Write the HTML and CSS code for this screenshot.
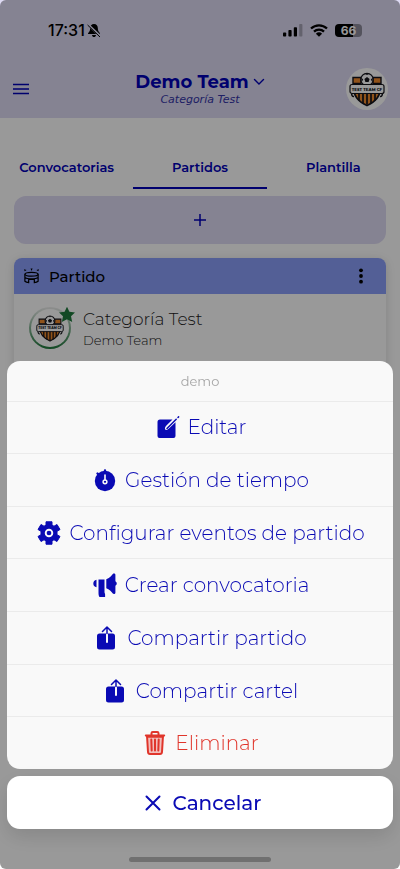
FILE: index.html
```
<!DOCTYPE html>
<html lang="es">
<head>
	<meta charset="utf-8">
	<meta name="viewport" content="width=device-width, initial-scale=1">
	<title>Demo Team - Partidos</title>
	<link rel="stylesheet" href="styles.css">
</head>
<body>
	<!-- shared icons -->
	<svg class="sprite" aria-hidden="true">
		<symbol id="crest" viewBox="0 0 36 34">
			<path d="M4 5h8v6H4zM24 5h8v6h-8z" fill="#f08a2c" stroke="#15151c" stroke-width="1.4"/>
			<path d="M5 17h26c0 7-4 12-13 16C9 29 5 24 5 17z" fill="#f08a2c" stroke="#15151c" stroke-width="1.6"/>
			<path d="M10 20v8M14 20v11M18 20v12M22 20v11M26 20v8" stroke="#15151c" stroke-width="1.7"/>
			<circle cx="18" cy="7" r="6.2" fill="#fff" stroke="#15151c" stroke-width="1.3"/>
			<path d="M18 4.500l2.600 1.900-1 3h-3.200l-1-3zM16 1.200h4l-2 1.300zM12.200 5l2 2-1.500 2.500zM23.800 5l-2 2 1.500 2.500z" fill="#15151c"/>
			<path d="M3 21a2 2 0 0 0 2 3M33 21a2 2 0 0 1-2 3" stroke="#15151c" stroke-width="1.500" fill="none"/>
			<rect x="1" y="12" width="34" height="9" rx="2" fill="#fff" stroke="#15151c" stroke-width="1.200"/>
			<text x="18" y="18" text-anchor="middle" class="crest-text">TEST TEAM CF</text>
		</symbol>
		<symbol id="share" viewBox="0 0 24 24">
			<path d="M5.500 7.500h5V16a1 1 0 0 0 2 0V7.500h4.500a2.500 2.500 0 0 1 2.500 2.500v11a2.500 2.500 0 0 1-2.500 2.500H4A2.500 2.500 0 0 1 1.500 21V10A2.500 2.500 0 0 1 4 7.500z" transform="translate(.5)" fill="currentColor"/>
			<path d="M12 7.500V1.500M7.500 5.500L12 1l4.500 4.500" fill="none" stroke="currentColor" stroke-width="1.500" stroke-linecap="round" stroke-linejoin="round"/>
		</symbol>
	</svg>

	<div class="app">
		<header class="header">
			<div class="status">
				<div class="status-left">
					<span>17:31</span>
					<svg width="14" height="15" viewBox="0 0 14 15"><path d="M7 1C4.500 1 3.200 3 3.200 5c0 3-1.200 4-2 5-.4.600-.2 1 .5 1h10.600c.7 0 .9-.4.500-1-.8-1-2-2-2-5 0-2-1.300-4-3.800-4zM5 12h4c-.2 1.400-1 2-2 2s-1.800-.6-2-2z" fill="currentColor"/><path d="M1 1.500l12.500 12" stroke="#dedaf3" stroke-width="2.400"/><path d="M.6 2l12.400 12" stroke="currentColor" stroke-width="1"/></svg>
				</div>
				<div class="status-right">
					<svg width="20" height="13" viewBox="0 0 20 13"><g fill="currentColor"><rect x="0" y="8.500" width="3.200" height="4" rx=".8"/><rect x="5.400" y="6" width="3.200" height="6.500" rx=".8"/><rect x="10.800" y="3.200" width="3.200" height="9.300" rx=".8"/><rect x="16.200" y="0" width="3.200" height="12.500" rx=".8" opacity=".25"/></g></svg>
					<svg width="18" height="13" viewBox="0 0 18 13"><path d="M1 4.500a11.600 11.600 0 0 1 16 0M4 7.700a7.200 7.200 0 0 1 10 0" fill="none" stroke="currentColor" stroke-width="2.300"/><path d="M5.900 9.700a4.500 4.500 0 0 1 6.200 0L9 12.800z" fill="currentColor"/></svg>
					<span class="battery">66</span>
				</div>
			</div>
			<div class="toolbar">
				<button class="menu-btn" type="button" aria-label="Menú">
					<svg width="18" height="12" viewBox="0 0 18 12"><path d="M1 1.500h16M1 6h16M1 10.500h16" stroke="currentColor" stroke-width="1.300"/></svg>
				</button>
				<div class="team">
					<button class="team-name" type="button">Demo Team
						<svg width="12" height="8" viewBox="0 0 12 8"><path d="M1.500 1.500L6 6l4.500-4.500" fill="none" stroke="currentColor" stroke-width="1.400" stroke-linecap="round"/></svg>
					</button>
					<div class="team-category">Categoría Test</div>
				</div>
				<div class="avatar"><svg width="36" height="35"><use href="#crest"/></svg></div>
			</div>
		</header>

		<nav class="tabs">
			<a href="#convocatorias">Convocatorias</a>
			<a href="#partidos" class="active">Partidos</a>
			<a href="#plantilla">Plantilla</a>
		</nav>

		<main class="content">
			<button class="add-btn" type="button" aria-label="Añadir partido">
				<svg width="14" height="14" viewBox="0 0 14 14"><path d="M7 1v12M1 7h12" stroke="currentColor" stroke-width="1.500"/></svg>
			</button>
			<section class="card">
				<div class="card-header">
					<svg width="17" height="16" viewBox="0 0 18 16"><g fill="none" stroke="currentColor" stroke-width="1.300"><ellipse cx="9" cy="6.200" rx="7" ry="2"/><path d="M2 6.200v7.300c1 .8 2.200 1.200 4 1.400v-3.400h6v3.400c1.800-.2 3-.6 4-1.400V6.200M2 9.500c2 2 12 2 14 0"/></g><path d="M1 .8l2.800.8-2 1.500zM17 .8l-2.800.8 2 1.500zM8 0h2.200L9 2.600z" fill="currentColor"/></svg>
					<h2>Partido</h2>
					<button class="more-btn" type="button" aria-label="Opciones">
						<svg width="6" height="16" viewBox="0 0 6 16" fill="currentColor"><circle cx="3" cy="2.300" r="1.900"/><circle cx="3" cy="8" r="1.900"/><circle cx="3" cy="13.700" r="1.900"/></svg>
					</button>
				</div>
				<div class="match">
					<div class="match-crest">
						<svg width="28" height="27"><use href="#crest"/></svg>
						<svg class="star" width="18" height="17" viewBox="0 0 18 17"><path d="M9 .8l2.400 5 5.600.6-4 3.900 1.200 5.700L9 13.200 3.800 16 5 10.300 1 6.400l5.600-.6z" fill="#1e7a3c"/></svg>
					</div>
					<div>
						<div class="match-title">Categoría Test</div>
						<div class="match-team">Demo Team</div>
					</div>
				</div>
			</section>
		</main>
	</div>

	<div class="overlay">
		<div class="sheet" role="dialog" aria-labelledby="sheet-title">
			<div class="sheet-group">
				<div class="sheet-title" id="sheet-title">demo</div>
				<button type="button">
					<svg viewBox="0 0 24 24"><path d="M4 4.500h12.500l-6.300 6.300c-1.200 1.400-1.600 2.800-1 3.700 1 .8 2.600.3 3.700-.9l6.600-6.400V21a2 2 0 0 1-2 2H3.500a2 2 0 0 1-2-2V7A2.500 2.500 0 0 1 4 4.500z" fill="currentColor"/><path d="M11 13.500l9.200-9.200M22 2.500l.6-.6" stroke="currentColor" stroke-width="1.500" stroke-linecap="round"/></svg>
					Editar
				</button>
				<button type="button">
					<svg viewBox="0 0 24 24"><circle cx="12" cy="13" r="10.200" fill="currentColor"/><path d="M12 2.500v2M4.500 5.500l2 2" stroke="currentColor" stroke-width="2.400" stroke-linecap="round"/><circle cx="12" cy="13.800" r="1.900" fill="none" stroke="#f9f9f9" stroke-width="1.500"/><path d="M12 7v5" stroke="#f9f9f9" stroke-width="1.600" stroke-linecap="round"/></svg>
					Gestión de tiempo
				</button>
				<button type="button">
					<svg viewBox="0 0 24 24"><path d="M9 .8h6v3.400l2 1 3-1.700 3 5-3 1.800v3.400l3 1.800-3 5-3-1.700-2 1v3.400H9v-3.400l-2-1-3 1.700-3-5 3-1.800v-3.400L1 8.500l3-5 3 1.700 2-1z" fill="currentColor" stroke="currentColor" stroke-width="1" stroke-linejoin="round"/><circle cx="12" cy="12" r="3.300" fill="none" stroke="#f9f9f9" stroke-width="1.900"/></svg>
					Configurar eventos de partido
				</button>
				<button type="button">
					<svg viewBox="0 0 24 24"><path d="M5.500 6.500h6V19c0 1.300.6 1.200.6 2.500V24H6.500C5.500 22.700 5.500 21 5.500 19zM3.500 6.700v7.600C1.500 14 .3 12.500.3 10.500s1.200-3.500 3.200-3.800zM13.300 6.300c3-1.200 5-3.200 6.500-5.300.8-.9 2.600-.5 2.600.8v6.500c1.800.8 1.800 3.600 0 4.400v7c0 1.300-1.800 1.700-2.600.8-1.500-2.100-3.500-4.100-6.500-5.300z" fill="currentColor"/></svg>
					Crear convocatoria
				</button>
				<button type="button">
					<svg viewBox="0 0 24 24"><use href="#share"/></svg>
					Compartir partido
				</button>
				<button type="button">
					<svg viewBox="0 0 24 24"><use href="#share"/></svg>
					Compartir cartel
				</button>
				<button type="button" class="danger">
					<svg viewBox="0 0 24 24"><path d="M4 4.500l1 16.500c.1 1.200.9 2 2 2h10c1.100 0 1.900-.8 2-2l1-16.500z" fill="currentColor" fill-opacity=".3"/><g fill="none" stroke="currentColor" stroke-width="2" stroke-linejoin="round" stroke-linecap="round"><path d="M4 4.500l1 16.500c.1 1.200.9 2 2 2h10c1.100 0 1.900-.8 2-2l1-16.500M2.800 4.500h18.400M8.500 4V2.300c0-.7.500-1.200 1.200-1.200h4.600c.7 0 1.200.5 1.200 1.200V4"/><path d="M4.500 5.500h15" stroke-width="2.500"/><path d="M8.300 8.500l.4 11M12 8.500v11M15.700 8.500l-.4 11"/></g></svg>
					Eliminar
				</button>
			</div>
			<button type="button" class="sheet-cancel">
				<svg viewBox="0 0 24 24"><path d="M5.500 5.500l13 13M18.500 5.500l-13 13" stroke="currentColor" stroke-width="2" stroke-linecap="round"/></svg>
				Cancelar
			</button>
		</div>
		<div class="home-bar"></div>
	</div>
</body>
</html>
```
FILE: styles.css
```
* {box-sizing:border-box}
body {margin:0;background:#fff;color:#000;font-family:Montserrat, Inter, sans-serif}
button {border:0;padding:0;background:none;color:inherit;font:inherit;cursor:pointer}
a {color:inherit;text-decoration:none}
svg {display:block;flex:none}
.sprite {display:none}
.crest-text {font-size:4px;font-weight:800;fill:#15151c}

.app {height:100vh;overflow:hidden;color:#0000b8}

/* header */
.header {background:#dedaf3;height:118px;padding-top:20px}
.status {display:flex;justify-content:space-between;align-items:center;height:20px;padding:0 38px 0 48px;color:#000;font-family:Inter, sans-serif}
.status-left, .status-right {display:flex;align-items:center}
.status-left {gap:2px;font-size:16px;font-weight:500}
.status-right {gap:7px}
.battery {width:27px;height:13px;border-radius:4px;background:linear-gradient(90deg, #000 66%, #8d8b9b 66%);color:#fff;font-size:12px;font-weight:700;line-height:13px;text-align:center}
.toolbar {display:grid;grid-template-columns:42px 1fr 42px;align-items:center;padding:28px 12px 0 12px}
.menu-btn {justify-self:start}
.team {text-align:center}
.team-name {display:inline-flex;align-items:center;gap:4px;font-size:18px;font-weight:700;line-height:22px}
.team-category {font-family:"DejaVu Sans", sans-serif;font-size:11px;font-style:italic;line-height:14px;color:#3434a8}
.avatar {display:flex;align-items:center;justify-content:center;width:42px;height:42px;border-radius:50%;background:#fff}

.tabs {display:grid;grid-template-columns:repeat(3, 1fr);padding-top:27px}
.tabs a {height:44px;border-bottom:2px solid transparent;font-size:13px;font-weight:600;line-height:44px;text-align:center}
.tabs a.active {border-color:#0000b8}

.content {padding:7px 14px}
.add-btn {display:flex;align-items:center;justify-content:center;width:100%;height:48px;border-radius:12px;background:#dedaf3}

.card {margin-top:14px;border-radius:8px;height:160px;overflow:hidden;background:#fff;box-shadow:0 2px 10px rgba(0,0,0,.15);color:#000}
.card-header {display:flex;align-items:center;gap:9px;height:36px;padding:0 22px 0 9px;background:#8a9efa}
.card-header h2 {margin:0;font-size:15px;font-weight:500}
.more-btn {margin-left:auto}
.match {display:flex;align-items:center;gap:12px;padding:13px 15px;color:#222}
.match-crest {position:relative;display:flex;align-items:center;justify-content:center;width:42px;height:42px;border:2px solid transparent;border-radius:50%;background:linear-gradient(#fff, #fff) padding-box, linear-gradient(#eee, #1e7a3c) border-box}
.star {position:absolute;top:-3px;right:-7px}
.match-title {font-size:17px;font-weight:300;line-height:24px}
.match-team {font-size:13px;font-weight:300;line-height:18px}

/* action sheet */
.overlay {position:fixed;inset:0;display:flex;flex-direction:column;justify-content:flex-end;padding:0 7px 7px;border-radius:6px;background:rgba(0,0,0,.4)}
.sheet {display:flex;flex-direction:column;gap:7px;color:#0a0ab4}
.sheet-group {display:grid;grid-template-rows:40px;grid-auto-rows:1fr;min-height:47vh;border-radius:13px;overflow:hidden;background:#f9f9f9}
.sheet-title {display:flex;align-items:center;justify-content:center;font-size:13px;font-weight:400;color:#a5a5a5}
.sheet button {display:flex;align-items:center;justify-content:center;gap:8px;padding-left:2px;font-size:20px;font-weight:300}
.sheet-group button {border-top:1px solid #ebebeb}
.sheet button svg {width:24px;height:24px}
.sheet .danger {color:#e0352b}
.sheet .sheet-cancel {height:53px;border-radius:13px;background:#fff;font-weight:500;box-shadow:0 8px 20px rgba(0,0,0,.12)}
.home-bar {align-self:center;width:142px;height:5px;margin-top:28px;border-radius:3px;background:#707070}
```
